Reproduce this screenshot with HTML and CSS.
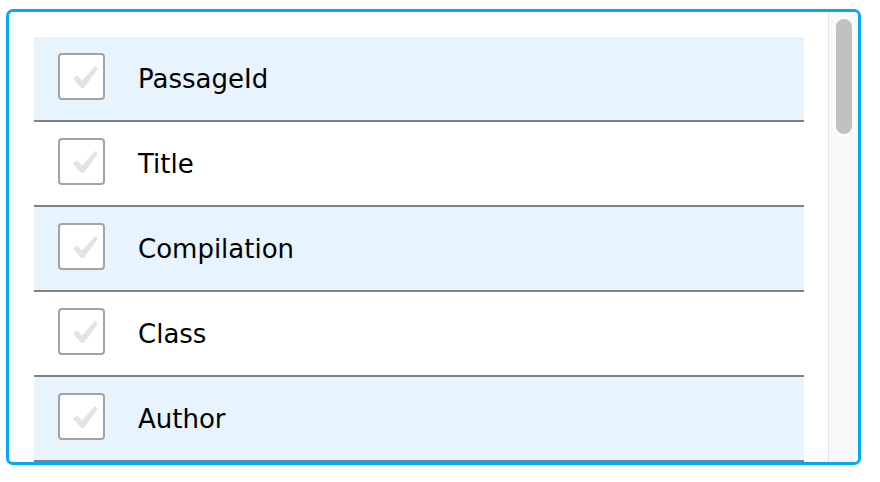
FILE: index.html
```html
<!DOCTYPE html>
<html>
<head>
<meta charset="utf-8">
<link rel="stylesheet" href="styles.css">
</head>
<body>
<div class="frame">
  <div class="scroll">
    <div class="list">
      <div class="row alt"><span class="box"><svg viewBox="0 0 25 22" width="25" height="22"><path d="M0 12.5 L4 9.5 L9 14.5 L22 0 L25 2.5 L10.8 22 L8.2 22 Z" fill="#e3e3e3"/></svg></span><span class="label">PassageId</span></div>
      <div class="row"><span class="box"><svg viewBox="0 0 25 22" width="25" height="22"><path d="M0 12.5 L4 9.5 L9 14.5 L22 0 L25 2.5 L10.8 22 L8.2 22 Z" fill="#e3e3e3"/></svg></span><span class="label">Title</span></div>
      <div class="row alt"><span class="box"><svg viewBox="0 0 25 22" width="25" height="22"><path d="M0 12.5 L4 9.5 L9 14.5 L22 0 L25 2.5 L10.8 22 L8.2 22 Z" fill="#e3e3e3"/></svg></span><span class="label">Compilation</span></div>
      <div class="row"><span class="box"><svg viewBox="0 0 25 22" width="25" height="22"><path d="M0 12.5 L4 9.5 L9 14.5 L22 0 L25 2.5 L10.8 22 L8.2 22 Z" fill="#e3e3e3"/></svg></span><span class="label">Class</span></div>
      <div class="row alt"><span class="box"><svg viewBox="0 0 25 22" width="25" height="22"><path d="M0 12.5 L4 9.5 L9 14.5 L22 0 L25 2.5 L10.8 22 L8.2 22 Z" fill="#e3e3e3"/></svg></span><span class="label">Author</span></div>
    </div>
  </div>
  <div class="gutter"><div class="thumb"></div></div>
</div>
</body>
</html>
```
FILE: styles.css
```css
html, body {
  margin: 0;
  padding: 0;
  background: #ffffff;
}
body {
  font-family: "DejaVu Sans", Verdana, sans-serif;
  padding: 9px 0 0 6px;
}
.frame {
  width: 855px;
  height: 456px;
  box-sizing: border-box;
  border: 3px solid #03a9f4;
  border-radius: 7px;
  display: flex;
  overflow: hidden;
  background: #ffffff;
}
.scroll {
  width: 819px;
  flex: none;
  overflow: hidden;
  padding: 25px 0 0 25px;
  box-sizing: border-box;
}
.list {
  width: 770px;
}
.row {
  height: 83px;
  border-bottom: 2px solid #808080;
  display: flex;
  align-items: center;
  background: #ffffff;
}
.row.alt {
  background: #e7f3fd;
}
.box {
  width: 47px;
  height: 47px;
  box-sizing: border-box;
  border: 2px solid #a3a3a3;
  border-radius: 4px;
  background: #ffffff;
  margin-left: 24px;
  align-self: flex-start;
  margin-top: 16px;
  padding: 11px 0 0 13px;
}
.box svg {
  display: block;
}
.label {
  margin-left: 33px;
  font-size: 26px;
  color: #000000;
}
.gutter {
  flex: 1;
  border-left: 1px solid #e6e6e6;
  background: #fafafa;
  padding: 7px 0 0 7px;
  box-sizing: border-box;
}
.thumb {
  width: 16px;
  height: 115px;
  border-radius: 8px;
  background: #c1c1c1;
}
```
